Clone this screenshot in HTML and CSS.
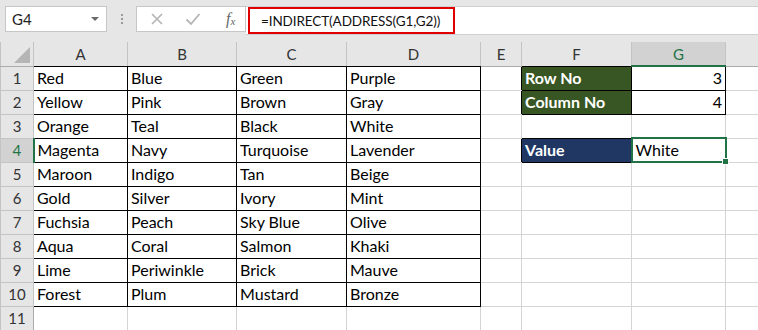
FILE: index.html
```html
<!DOCTYPE html>
<html lang="en">
<head>
    <meta charset="UTF-8">
    <title>INDIRECT ADDRESS</title>
    <link rel="stylesheet" href="styles.css">
</head>
<body>
    <div class="toolbar">
        <div class="namebox">
            <span>G4</span>
            <span class="caret"></span>
        </div>
        <div class="grip"><i></i><i></i><i></i></div>
        <div class="fbuttons">
            <svg width="14" height="14" viewBox="0 0 14 14"><path d="M2 2 L12 12 M12 2 L2 12" stroke="#b4b4b4" stroke-width="1.6" fill="none"/></svg>
            <svg width="16" height="14" viewBox="0 0 16 14"><path d="M1.5 7.5 L6 12 L14.5 2" stroke="#b4b4b4" stroke-width="1.8" fill="none"/></svg>
            <span class="fx">f<sub>x</sub></span>
        </div>
        <div class="formula">
            <span class="highlight">=INDIRECT(ADDRESS(G1,G2))</span>
        </div>
    </div>

    <table class="sheet">
        <colgroup>
            <col class="c-head">
            <col class="c-a">
            <col class="c-b">
            <col class="c-c">
            <col class="c-d">
            <col class="c-e">
            <col class="c-f">
            <col class="c-g">
            <col>
        </colgroup>
        <tr class="colhead">
            <th class="corner"><span class="tri"></span></th>
            <th class="top-b">A</th>
            <th class="top-b">B</th>
            <th class="top-b">C</th>
            <th class="top-b">D</th>
            <th>E</th>
            <th class="top-b">F</th>
            <th class="sel-col">G</th>
            <th></th>
        </tr>
        <tr>
            <th class="rowhead">1</th>
            <td class="b">Red</td><td class="b">Blue</td><td class="b">Green</td><td class="b">Purple</td>
            <td class="edge"></td><td class="b label green">Row No</td><td class="b num">3</td><td></td>
        </tr>
        <tr>
            <th class="rowhead">2</th>
            <td class="b">Yellow</td><td class="b">Pink</td><td class="b">Brown</td><td class="b">Gray</td>
            <td class="edge"></td><td class="b label green">Column No</td><td class="b num">4</td><td></td>
        </tr>
        <tr>
            <th class="rowhead">3</th>
            <td class="b">Orange</td><td class="b">Teal</td><td class="b">Black</td><td class="b">White</td>
            <td></td><td class="under"></td><td></td><td></td>
        </tr>
        <tr>
            <th class="rowhead sel-row">4</th>
            <td class="b">Magenta</td><td class="b">Navy</td><td class="b">Turquoise</td><td class="b">Lavender</td>
            <td class="edge"></td><td class="b label blue">Value</td><td class="active">White<span class="handle"></span></td><td></td>
        </tr>
        <tr>
            <th class="rowhead">5</th>
            <td class="b">Maroon</td><td class="b">Indigo</td><td class="b">Tan</td><td class="b">Beige</td>
            <td></td><td></td><td></td><td></td>
        </tr>
        <tr>
            <th class="rowhead">6</th>
            <td class="b">Gold</td><td class="b">Silver</td><td class="b">Ivory</td><td class="b">Mint</td>
            <td></td><td></td><td></td><td></td>
        </tr>
        <tr>
            <th class="rowhead">7</th>
            <td class="b">Fuchsia</td><td class="b">Peach</td><td class="b">Sky Blue</td><td class="b">Olive</td>
            <td></td><td></td><td></td><td></td>
        </tr>
        <tr>
            <th class="rowhead">8</th>
            <td class="b">Aqua</td><td class="b">Coral</td><td class="b">Salmon</td><td class="b">Khaki</td>
            <td></td><td></td><td></td><td></td>
        </tr>
        <tr>
            <th class="rowhead">9</th>
            <td class="b">Lime</td><td class="b">Periwinkle</td><td class="b">Brick</td><td class="b">Mauve</td>
            <td></td><td></td><td></td><td></td>
        </tr>
        <tr>
            <th class="rowhead">10</th>
            <td class="b">Forest</td><td class="b">Plum</td><td class="b">Mustard</td><td class="b">Bronze</td>
            <td></td><td></td><td></td><td></td>
        </tr>
        <tr>
            <th class="rowhead">11</th>
            <td></td><td></td><td></td><td></td>
            <td></td><td></td><td></td><td></td>
        </tr>
    </table>
</body>
</html>
```

FILE: styles.css
```css
body {
    margin: 0;
    background: #ffffff;
    font-family: Lato, "Liberation Sans", sans-serif;
    font-size: 15px;
    color: #000;
    overflow: hidden;
}

/* formula bar */
.toolbar {
    display: flex;
    align-items: center;
    height: 42px;
    background: #e6e6e6;
    padding-left: 5px;
    box-sizing: border-box;
    padding-bottom: 5px;
}

.namebox {
    width: 102px;
    height: 26px;
    box-sizing: border-box;
    background: #fff;
    border: 1px solid #c6c6c6;
    display: flex;
    align-items: center;
    justify-content: space-between;
    padding: 0 7px 0 6px;
    color: #222;
}

.caret {
    width: 0;
    height: 0;
    border-left: 4px solid transparent;
    border-right: 4px solid transparent;
    border-top: 4px solid #6b6b6b;
}

.grip {
    display: flex;
    flex-direction: column;
    gap: 2px;
    margin: 0 13px 0 14px;
}

.grip i {
    width: 2px;
    height: 2px;
    background: #9a9a9a;
}

.fbuttons {
    width: 110px;
    height: 26px;
    box-sizing: border-box;
    background: #fff;
    border: 1px solid #c6c6c6;
    display: flex;
    align-items: center;
    padding: 0 6px 0 13px;
    gap: 21px;
}

.fx {
    font-family: "Liberation Serif", serif;
    font-style: italic;
    color: #666;
    font-size: 16px;
    margin-left: 4px;
}

.fx sub {
    font-size: 11px;
    vertical-align: -1px;
}

.formula {
    flex: 1;
    height: 29px;
    margin-top: 3px;
    box-sizing: border-box;
    background: #fff;
    border-top: 1px solid #d0d0d0;
    border-bottom: 1px solid #d0d0d0;
    display: flex;
    align-items: center;
}

.highlight {
    display: inline-block;
    height: 27px;
    width: 207px;
    box-sizing: border-box;
    border: 2px solid #e00000;
    padding: 4px 0 0 11px;
    margin-left: 2px;
    color: #111;
    font-size: 13.5px;
    letter-spacing: -0.1px;
}

/* sheet */
.sheet {
    border-collapse: collapse;
    table-layout: fixed;
    width: 760px;
}

.c-head { width: 33px; }
.c-a { width: 94px; }
.c-b { width: 109px; }
.c-c { width: 110px; }
.c-d { width: 134px; }
.c-e { width: 41px; }
.c-f { width: 110px; }
.c-g { width: 94px; }

.sheet tr {
    height: 24px;
}

.sheet td {
    border: 1px solid #d4d4d4;
    padding: 0 3px;
    white-space: nowrap;
    overflow: visible;
    font-size: 16px;
    line-height: 18px;
}

.sheet th {
    background: #e6e6e6;
    font-weight: normal;
    color: #333;
    border: 1px solid #c4c4c4;
    padding: 0;
}

.colhead {
    height: 23px;
}

.colhead th {
    border-top: none;
    border-bottom: 1px solid #ababab;
}

.colhead th.top-b {
    border-bottom-color: #000;
}

.colhead th.sel-col {
    background: #d2d2d2;
    color: #217346;
    border-bottom: 2px solid #217346;
}

.corner {
    position: relative;
}

.tri {
    position: absolute;
    right: 3px;
    bottom: 3px;
    width: 0;
    height: 0;
    border-left: 16px solid transparent;
    border-bottom: 16px solid #b5b5b5;
}

.rowhead {
    text-align: center;
    border-left: none;
    border-right: 1px solid #000;
}

.rowhead.sel-row {
    background: #d2d2d2;
    color: #217346;
    border-right: 2px solid #217346;
}

tr:last-child .rowhead {
    border-right-color: #ababab;
}

.sheet td.b {
    border: 1px solid #000;
}

.sheet td.edge {
    border-right: 1px solid #000;
}

.sheet td.under {
    border-bottom: 1px solid #000;
}

.label {
    color: #fff;
    font-weight: bold;
}

.green {
    background: #375623;
}

.blue {
    background: #203764;
}

.num {
    text-align: right;
}

.sheet td.active {
    position: relative;
    border: 2px solid #217346;
}

.handle {
    position: absolute;
    right: -4px;
    bottom: -4px;
    width: 5px;
    height: 5px;
    background: #217346;
    border: 1px solid #fff;
}
```
